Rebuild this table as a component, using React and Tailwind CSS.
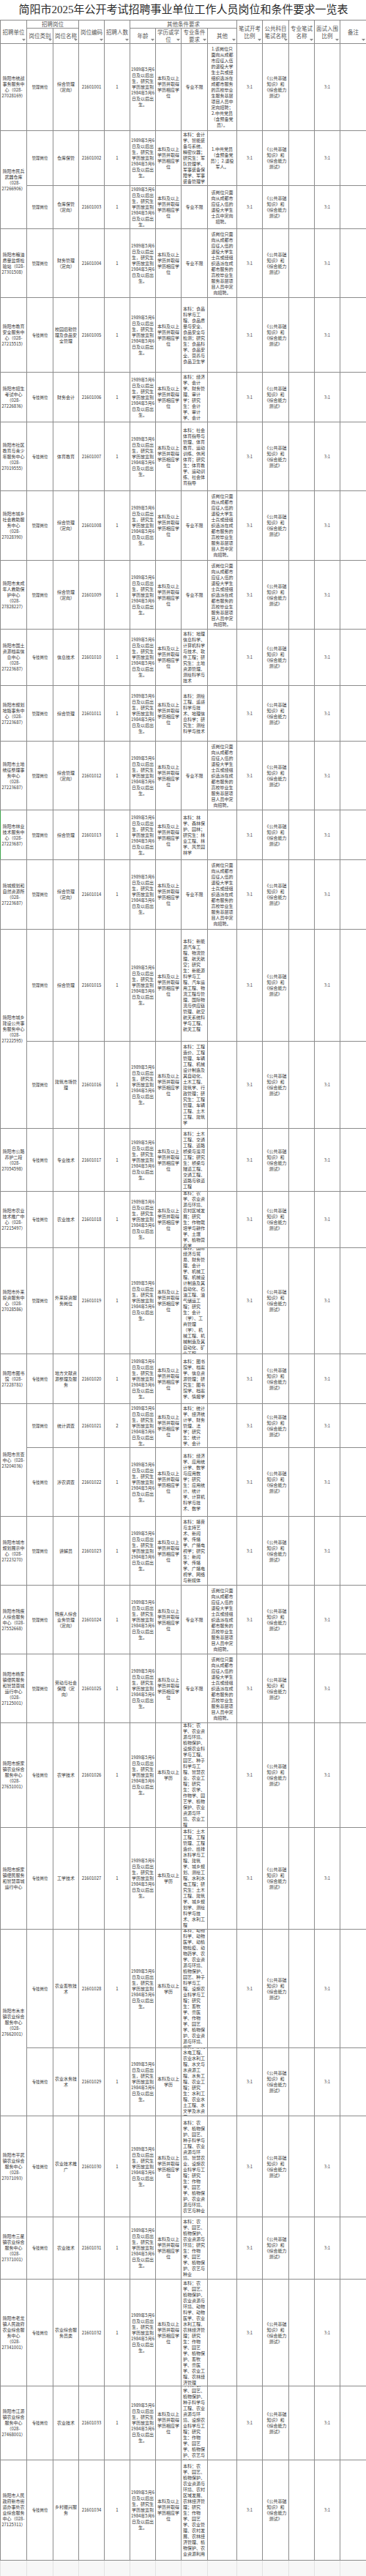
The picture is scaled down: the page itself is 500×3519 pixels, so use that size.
import React from "react";

const AGE = "1989年5月6日及以后出生，研究生学历放宽到1984年5月6日及以后出生。";
const EDU = "本科及以上学历并取得学历相应学位";
const EDU2 = "本科及以上学历";
const DX = "该岗位只面向从成都市应征入伍的退役大学生士兵或经组织选派在成都市服务的高校毕业生服务基层项目人员中定向招聘。";
const EXAM = "《公共基础知识》和《综合能力测试》";
const ANY = "专业不限";
const GL = "管理岗位";
const ZJ = "专技岗位";

// unit: string for first row of a unit, span: rows the unit covers
const rows = [
    { h: 119, unit: "简阳市统战事务服务中心（028-27028169）", type: GL, name: "综合管理（定向）", prof: ANY, other: "1.该岗位只面向从成都市应征入伍的退役大学生士兵或经组织选派在成都市服务的高校毕业生服务基层项目人员中定向招聘；2.中共党员（含预备党员）。" },
    { h: 75, unit: "简阳市民兵武器仓库（028-27266906）", span: 2, type: GL, name: "仓库保管", prof: "本科：会计学、智能装备与系统、精密仪器；研究生：军队管理学、军事装备保障学、军事装备管理学", other: "1.中共党员（含预备党员）；2.退役军人。" },
    { h: 59, type: GL, name: "仓库保管（定向）", prof: ANY, other: "该岗位只面向从成都市应征入伍的退役大学生士兵中定向招聘。" },
    { h: 94, unit: "简阳市粮油质量监督检验站（028-27301508）", type: GL, name: "财务管理（定向）", prof: ANY, other: DX },
    { h: 102, unit: "简阳市教育安全服务中心（028-27215515）", type: ZJ, name: "校园后勤管理及食品安全管理", prof: "本科：食品科学与工程、食品质量与安全、食品安全与检测；研究生：食品科学、食品安全、营养与食品卫生学" },
    { h: 68, unit: "简阳市招生考试中心（028-27226836）", type: ZJ, name: "财务会计", prof: "本科：经济学、会计学、财务管理、审计学；研究生：会计学、审计学、会计" },
    { h: 94, unit: "简阳市社区教育与青少年服务中心（028-27019555）", type: ZJ, name: "体育教育", prof: "本科：社会体育指导与管理、体育教育、运动训练、休闲体育；研究生：体育教学、运动训练、社会体育指导" },
    { h: 95, unit: "简阳市城乡社会救助服务中心（028-27028390）", type: GL, name: "综合管理（定向）", prof: ANY, other: DX },
    { h: 94, unit: "简阳市未成年人救助保护中心（028-27828227）", type: GL, name: "综合管理（定向）", prof: ANY, other: DX },
    { h: 77, unit: "简阳市国土资源档案信息中心（028-27223687）", type: ZJ, name: "信息技术", prof: "本科：地理信息科学、计算机科学与技术、软件工程；研究生：土地资源管理、测绘科学与技术" },
    { h: 76, unit: "简阳市规划地籍事务中心（028-27223687）", type: GL, name: "综合管理", prof: "本科：测绘工程、遥感科学与技术、地理信息科学；研究生：测绘科学与技术" },
    { h: 94, unit: "简阳市土地统征整理事务中心（028-27223687）", type: GL, name: "综合管理（定向）", prof: ANY, other: DX },
    { h: 68, unit: "简阳市林业技术服务中心（028-27223687）", type: GL, name: "综合管理", prof: "本科：林学、森林保护、园林；研究生：林业工程、林学、风景园林学", mark: true },
    { h: 95, unit: "简城规划和自然资源所（028-27223687）", type: GL, name: "综合管理（定向）", prof: ANY, other: DX },
    { h: 153, unit: "简阳市城乡建设公共事务服务中心（028-27222595）", span: 2, type: GL, name: "综合管理", prof: "本科：新能源汽车工程、物流管理、航天航空；研究生：新能源科学与工程、汽车运用工程、物流工程与管理、国际物流与供应链管理、航空航天系统科学与工程、航天工程" },
    { h: 119, type: GL, name: "建筑市场管理", prof: "本科：工程造价、工程管理、车辆工程、机械设计制造及其自动化、土木工程、建筑学、行政管理；研究生：工程管理、车辆工程、土木工程、建筑学" },
    { h: 86, unit: "简阳市公路养护二段（028-27054598）", type: ZJ, name: "专业技术", prof: "本科：土木工程、交通工程、道路桥梁与渡河工程；研究生：桥梁与隧道工程、交通工程、道路与铁道工程" },
    { h: 77, unit: "简阳市农业技术推广中心（028-27215497）", type: ZJ, name: "农业技术", prof: "本科：农学、农业资源与环境、农村区域发展；研究生：作物栽培学与耕作学、土壤学、植物营养学" },
    { h: 145, unit: "简阳市外来投资服务中心（028-27028586）", type: GL, name: "外来投资服务岗位", prof: "本科：国际经济与贸易、财务管理、会计学、机械工程、机械设计制造及其自动化、石油工程、油气储运工程；研究生：会计（学）、工商管理（学）、机械工程、机械制造及其自动化、矿业工程" },
    { h: 68, unit: "简阳市图书馆（028-27228781）", type: ZJ, name: "地方文献资源整理及服务", prof: "本科：图书馆学、档案学、信息资源管理；研究生：图书馆学、档案学、情报学" },
    { h: 60, unit: "简阳市普查中心（028-23204036）", span: 2, type: GL, name: "统计调查", n: 2, prof: "本科：统计学、经济统计学、财务管理、法学；研究生：统计学、会计" },
    { h: 94, type: ZJ, name: "涉农调查", prof: "本科：经济学、应用统计学、数学与应用数学；研究生：应用统计、统计学、计算机科学与技术、数学" },
    { h: 94, unit: "简阳市城市规划展示中心（028-27223270）", type: GL, name: "讲解员", prof: "本科：播音与主持艺术、新闻学、传播学、广播电视学；研究生：新闻学、传播学、广播电视学、网络与新媒体" },
    { h: 94, unit: "简阳市残疾人综合服务中心（028-27552668）", type: GL, name: "残疾人综合业务管理（定向）", prof: ANY, other: DX },
    { h: 94, unit: "简阳市杨家镇便民服务和智慧蓉城运行中心（028-27125001）", type: GL, name: "劳动与社会保障（定向）", prof: ANY, other: DX },
    { h: 143, unit: "简阳市施家镇农业综合服务中心（028-27651001）", type: ZJ, name: "农学技术", edu: EDU2, prof: "本科：农学、农业资源与环境、植物保护、设施农业科学与工程、园艺、种子科学与工程、智慧农业、农业工程；研究生：农学、作物学、园艺学、植物保护、农业资源与环境、农业工程" },
    { h: 139, unit: "简阳市施家镇便民服务和智慧蓉城运行中心", type: ZJ, name: "工学技术", edu: EDU2, prof: "本科：土木工程、工程管理、工程造价、给排水科学与工程、建筑学、城乡规划、测绘工程、水利水电工程；研究生：土木工程、建筑学、城乡规划学、测绘科学与技术、水利工程" },
    { h: 162, unit: "简阳市禾丰镇农业综合服务中心（028-27662001）", span: 2, type: ZJ, name: "农业畜牧技术", edu: EDU2, prof: "本科：动物科学、动物医学、动植物检疫、动物药学、农学、农业资源与环境、植物保护、园艺、种子科学与工程、设施农业科学与工程；研究生：畜牧学、兽医学、作物学、园艺学、植物保护、农业资源与环境、兽医" },
    { h: 93, type: ZJ, name: "农业水务技术", edu: EDU2, prof: "本科：水利水电工程、农业水利工程、水文与水资源工程、水务工程、农业工程；研究生：水利工程、农业水土工程、水文学及水资源" },
    { h: 138, unit: "简阳市平武镇农业综合服务中心（028-27071093）", type: ZJ, name: "农业技术推广", prof: "本科：农学、植物保护、园艺、种子科学与工程、农业资源与环境、智慧农业、设施农业科学与工程；研究生：作物学、园艺学、植物保护、农业资源与环境、农艺与种业" },
    { h: 85, unit: "简阳市三星镇农业综合服务中心（028-27371001）", type: ZJ, name: "农业技术", prof: "本科：农学、园艺、植物保护、农业资源与环境；研究生：作物学、园艺学、植物保护、农艺与种业" },
    { h: 146, unit: "简阳市老龙镇人民政府农业综合服务中心（028-27341001）", type: ZJ, name: "农业综合服务员类", prof: "本科：农学、园艺、植物保护、农业资源与环境、动物科学、动物医学、农业水利工程、农林经济管理；研究生：作物学、园艺学、植物保护、畜牧学、兽医学、农业工程、农林经济管理" },
    { h: 101, unit: "简阳市江源镇农业综合服务中心（028-27468001）", type: ZJ, name: "农业技术", prof: "本科：农学、园艺、植物保护、种子科学与工程、农业资源与环境、设施农业科学与工程；研究生：作物学、园艺学、植物保护、农艺与种业" },
    { h: 137, unit: "简阳市人民政府新市街道办事处农业综合服务中心（028-27125311）", type: ZJ, name: "乡村振兴服务", prof: "本科：农学、园艺、植物保护、农业资源与环境、农村区域发展、农林经济管理；研究生：作物学、园艺学、农业管理、农村发展、农林经济管理、植物保护、农业资源利用" },
];

const widths = [36, 36, 35, 35, 35, 35, 35, 36, 40, 35, 36, 35, 35, 36];

const Arrow = () => (
    <span className="absolute bottom-[2px] right-[1px] flex h-[5px] w-[6px] items-center justify-center">
        <svg width="5" height="3" viewBox="0 0 5 3">
            <path d="M0 0 L5 0 L2.5 3 Z" fill="#8e8e8e" />
        </svg>
    </span>
);

const Th = ({ children, rowSpan, colSpan, arrow = true }) => (
    <th
        rowSpan={rowSpan}
        colSpan={colSpan}
        className="relative border border-[#8c8c8c] p-0 px-[1px] align-middle text-[7.5px] font-normal leading-[10px] text-[#555]"
    >
        {children}
        {arrow && <Arrow />}
    </th>
);

const Cell = ({ h, rowSpan, className = "", children, mark }) => (
    <td
        rowSpan={rowSpan}
        className={`border border-[#8c8c8c] p-0 align-middle ${mark ? "border-l-[#3fa34d]" : ""}`}
    >
        <div className="flex items-center overflow-hidden" style={{ height: h - 1 }}>
            <div className={`w-full ${className}`}>{children}</div>
        </div>
    </td>
);

export default function App() {
    return (
        <div className="w-[500px] bg-white font-['Noto_Sans_CJK_SC',sans-serif] text-[#333]">
            <table className="w-[500px] table-fixed border-collapse">
                <colgroup>
                    {widths.map((w, i) => (
                        <col key={i} style={{ width: w }} />
                    ))}
                </colgroup>
                <thead>
                    <tr className="h-[27px]">
                        <th
                            colSpan={14}
                            className="border-b border-[#8c8c8c] p-0 text-center align-middle font-['Liberation_Serif','Noto_Sans_CJK_SC',serif] text-[15px] font-normal leading-[27px] text-[#2a2a2a]"
                        >
                            简阳市2025年公开考试招聘事业单位工作人员岗位和条件要求一览表
                        </th>
                    </tr>
                    <tr className="h-[10px]">
                        <Th rowSpan={2}>招聘单位</Th>
                        <Th colSpan={2} arrow={false}>招聘岗位</Th>
                        <Th rowSpan={2}>岗位编码</Th>
                        <Th rowSpan={2}>招聘人数</Th>
                        <Th colSpan={4} arrow={false}>其他条件要求</Th>
                        <Th rowSpan={2}>笔试开考比例</Th>
                        <Th rowSpan={2}>公共科目笔试名称</Th>
                        <Th rowSpan={2}>专业笔试名称</Th>
                        <Th rowSpan={2}>面试入围比例</Th>
                        <Th rowSpan={2}>备注</Th>
                    </tr>
                    <tr className="h-[20px]">
                        <Th>岗位类别</Th>
                        <Th>岗位名称</Th>
                        <Th>年龄</Th>
                        <Th>学历或学位</Th>
                        <Th>专业条件要求</Th>
                        <Th>其他</Th>
                    </tr>
                </thead>
                <tbody className="text-[6px] leading-[8px]">
                    {rows.map((r, i) => {
                        const unitH = r.span ? r.h + rows[i + 1].h : r.h;
                        const num = String(1001 + i).padStart(5, "0");
                        return (
                            <tr key={i} style={{ height: r.h }}>
                                {r.unit && (
                                    <Cell h={unitH} rowSpan={r.span} mark={r.mark} className="px-[1px] text-center">
                                        {r.unit}
                                    </Cell>
                                )}
                                <Cell h={r.h} className="text-center text-[5.4px]">
                                    {r.type}
                                </Cell>
                                <Cell h={r.h} className="px-[2px] text-center">
                                    {r.name}
                                </Cell>
                                <Cell h={r.h} className="whitespace-nowrap text-center">
                                    216{num}
                                </Cell>
                                <Cell h={r.h} className="text-center">
                                    {r.n || 1}
                                </Cell>
                                <Cell h={r.h} className="px-[1px] text-center">
                                    {AGE}
                                </Cell>
                                <Cell h={r.h} className="px-[1px] text-center">
                                    {r.edu || EDU}
                                </Cell>
                                <Cell
                                    h={r.h}
                                    className={`px-[2px] ${r.prof === ANY ? "text-center" : "text-left"}`}
                                >
                                    {r.prof}
                                </Cell>
                                <Cell h={r.h} className="px-[3px] text-center">
                                    {r.other || ""}
                                </Cell>
                                <Cell h={r.h} className="text-center text-[#555]">
                                    3:1
                                </Cell>
                                <Cell h={r.h} className="px-[2px] text-center">
                                    {EXAM}
                                </Cell>
                                <Cell h={r.h} />
                                <Cell h={r.h} className="text-center text-[#555]">
                                    3:1
                                </Cell>
                                <Cell h={r.h} />
                            </tr>
                        );
                    })}
                    <tr className="h-[24px] bg-[#f7f7f7]">
                        {widths.map((w, i) => (
                            <td key={i} className="border-x border-[#e2e2e2] p-0" />
                        ))}
                    </tr>
                </tbody>
            </table>
        </div>
    );
}
